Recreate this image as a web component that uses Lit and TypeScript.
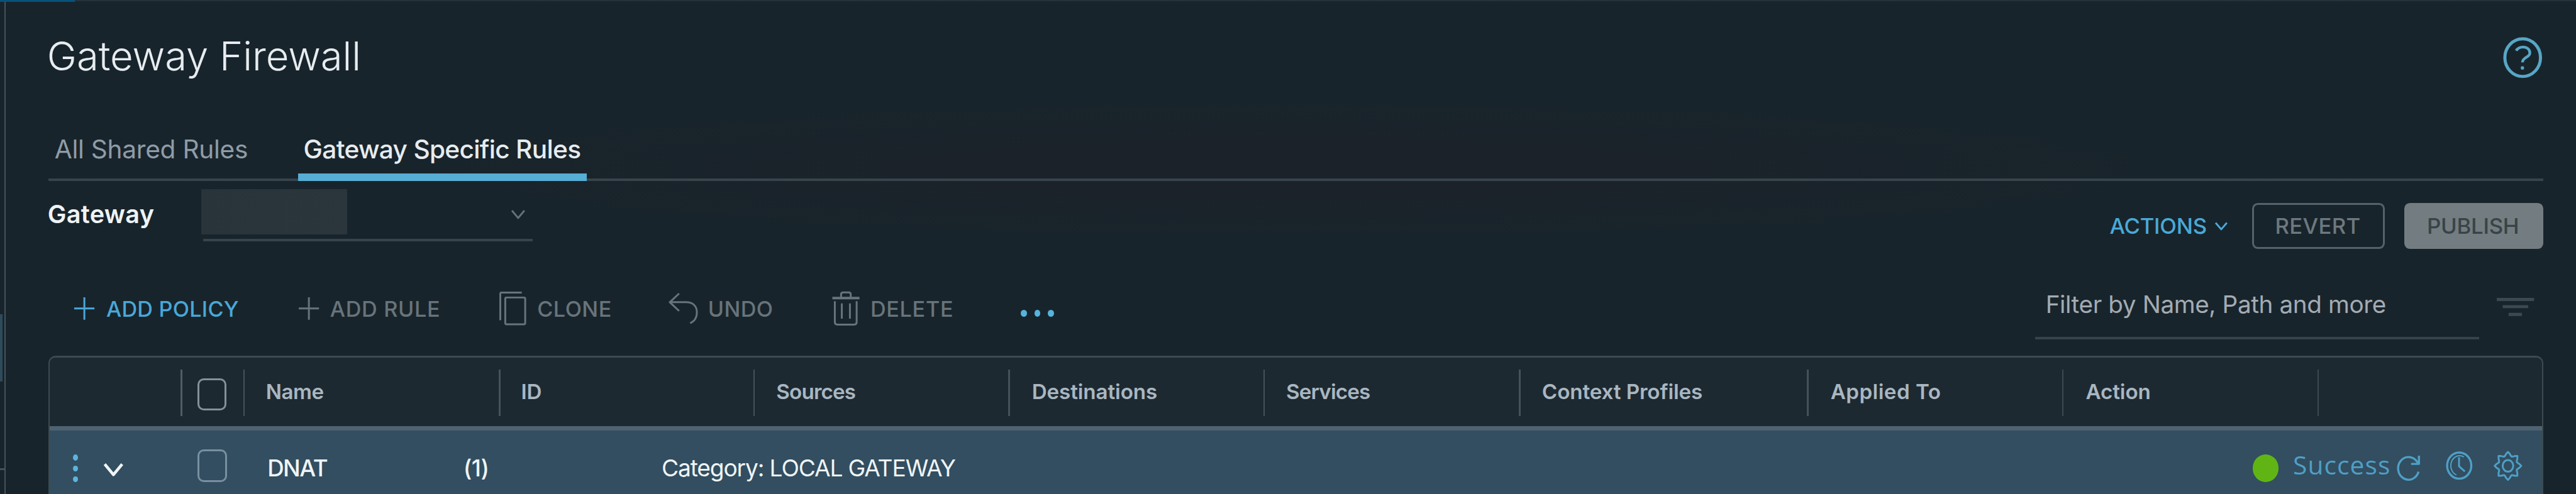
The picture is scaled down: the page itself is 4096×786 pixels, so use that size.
import { LitElement, html, css, svg } from "lit";
import { customElement } from "lit/decorators.js";

const COLUMNS = ["Name", "ID", "Sources", "Destinations", "Services", "Context Profiles", "Applied To", "Action", ""];

const gearPath = (() => {
  const cx = 22, cy = 23.5, pts: string[] = [];
  for (let i = 0; i < 8; i++) {
    const steps: [number, number][] = [[-9, 20.8], [0, 22], [9, 20.8], [14.5, 17.2], [22.5, 15.8], [30.5, 17.2]];
    for (const [d, r] of steps) {
      const a = ((i * 45 + d - 90) * Math.PI) / 180;
      const rr = d === 0 ? r : r - (Math.abs(d) === 9 ? 1.6 : 0);
      pts.push(`${(cx + rr * 0.97 * Math.cos(a)).toFixed(2)} ${(cy + rr * 1.02 * Math.sin(a)).toFixed(2)}`);
    }
  }
  return `M${pts.join("L")}Z`;
})();

const icon = (cls: string, w: number, h: number, body: unknown) =>
  html`<svg class="icon ${cls}" width=${w} height=${h} viewBox="0 0 ${w} ${h}">${body}</svg>`;

const help = icon("help", 64, 67, svg`
  <ellipse cx="31.5" cy="33" rx="28.6" ry="30.2" stroke-width="5"/>
  <path d="M21 21.8C23.5 17.6 27.5 16 32 16C38.5 16 43 19.8 43 25.4C43 33 31.2 32 31.2 40.5" stroke-width="4.4"/>
  <rect class="solid" x="28.6" y="47" width="5" height="5.2" rx="1.5"/>`);
const plus = icon("plus", 35, 38, svg`<path d="M17.3 1V37M1 19H33.5" stroke-width="3"/>`);
const clone = icon("", 47, 60, svg`
  <path d="M3.5 49V6.5Q3.5 4.5 5.5 4.5H38"/><rect x="11.5" y="12.5" width="32" height="43" rx="2"/>`);
const undo = icon("", 50, 54, svg`
  <path d="M18 3L3 17L18 31M3 17H29C41 17 46.5 24 46.5 33C46.5 42 42 48 35.7 50.5"/>`);
const trash = icon("", 46, 58, svg`
  <path d="M1.5 12.3H45" stroke-width="4"/>
  <path d="M15.5 11V6.5Q15.5 3.3 18.7 3.3H27.8Q31 3.3 31 6.5V11M5.5 17.5V51Q5.5 55 9.5 55H36.5Q40.5 55 40.5 51V17.5M16.7 21V45.5M29.7 21V45.5"/>`);
const refresh = icon("", 38, 41, svg`
  <path d="M35 26.8A16.8 18.2 0 1 1 32.4 10.5L35 13.5M35.6 1V14.2H23" stroke-width="3.4"/>`);
const clock = icon("", 43, 46, svg`
  <ellipse cx="21.5" cy="23" rx="19.4" ry="21" stroke-width="3.4"/>
  <path d="M29 9.2A14 16 0 1 0 17 38" stroke-width="2"/>
  <path d="M21.2 9.5V24L30.5 32.5" stroke-width="3"/>`);
const gear = icon("", 44, 47, svg`
  <path d=${gearPath} stroke-width="3"/><ellipse cx="22" cy="23.5" rx="8.5" ry="9.3" stroke-width="3"/>`);
const filter = icon("filter", 60, 30, svg`<path d="M0 3.5H60M9.5 15H50.5M19 27.5H40.5" stroke-width="5"/>`);

@customElement("app-root")
export class AppRoot extends LitElement {
  static styles = css`
    :host { display: block; width: 4096px; height: 786px; overflow: hidden; background: #18252c; }
    * { box-sizing: border-box; }
    .app {
      zoom: 0.99105; display: flex; width: 4133px; height: 794px; overflow: hidden;
      font-family: Inter, "Open Sans", sans-serif; white-space: nowrap; color: #e6ecf0;
      background:
        linear-gradient(#26323a, #26323a) 0 0 / 100% 2px no-repeat,
        radial-gradient(ellipse 1400px 110px at 2080px 272px, #1b222a 40%, transparent 100%),
        #18242b;
    }
    .icon { display: block; flex: none; fill: none; stroke: currentColor; stroke-width: 3; stroke-linejoin: round; overflow: visible; }
    .solid { fill: currentColor; stroke: none; }

    .rail { flex: none; width: 9px; border-right: 2.1px solid #465259; display: flex; flex-direction: column; }
    .progress { height: 3px; width: 120px; background: #06537c; flex: none; }
    .active-nav { margin-top: 502px; height: 107px; width: 4px; background: #2e4b5b; flex: none; }
    .nav-line { margin-top: 140px; height: 3px; width: 7px; background: #465259; flex: none; }

    .main { flex: none; width: 4071.5px; padding-left: 68.5px; display: flex; flex-direction: column; }

    .title { flex: none; height: 180px; display: flex; justify-content: space-between; align-items: center; }
    .title h1 { margin: 0; font-size: 64px; font-weight: 350; letter-spacing: -0.05px; line-height: 80px; text-indent: -2px; }
    .help { color: #57a6c6; margin: 6px 1px 0 0; }

    .tabs { flex: none; height: 111px; display: flex; gap: 71.5px; background: linear-gradient(#38444b, #38444b) 0 107px / 100% 4px no-repeat; }
    .tab { height: 111px; padding: 9px 0 0 10px; font-size: 41px; line-height: 102px; }
    .shared { width: 329px; color: #8f9ca8; letter-spacing: -0.27px; }
    .specific { width: 463px; padding-left: 9px; font-weight: 500; letter-spacing: -0.7px; border-bottom: 12.2px solid #56aed5; }

    .gateway { flex: none; height: 139px; display: flex; align-items: flex-start; }
    .label { width: 245.5px; margin-top: 29px; line-height: 50px; text-indent: -1px; font-size: 40px; font-weight: 600; letter-spacing: 0.3px; color: #eef3f6; }
    .select { width: 532px; height: 97px; margin-top: 0; padding: 13px 12px 0 0; display: flex; justify-content: space-between; background: linear-gradient(#37444b, #37444b) 3px 92.5px / 529px 4.5px no-repeat; }
    .redacted { width: 234px; height: 72px; background: linear-gradient(90deg, #28343a, #2a353c); }
    .caret { color: #65727a; margin-top: 32px; }
    .buttons { margin-left: auto; margin-top: 35px; display: flex; align-items: center; height: 74px; font-size: 35px; font-weight: 500; line-height: 74px; }
    .actions { display: flex; align-items: center; color: #4aa9d8; letter-spacing: -0.23px; gap: 12px; margin-right: 38.5px; }
    .btn { height: 74px; border-radius: 9px; display: flex; align-items: center; justify-content: center; }
    .revert { width: 213.5px; border: 3.1px solid #566269; color: #6d787f; letter-spacing: 0.32px; margin-right: 31.5px; padding-right: 2px; }
    .publish { width: 222.5px; background: #737d81; color: #384348; letter-spacing: -0.21px; padding-right: 3px; }

    .toolbar { flex: none; height: 141px; padding-bottom: 10px; display: flex; align-items: center; font-size: 34.5px; font-weight: 550; color: #68747b; }
    .tool { display: flex; align-items: center; flex: none; }
    .policy { width: 359.5px; padding-left: 41px; gap: 17px; color: #48a8d8; letter-spacing: 0.25px; }
    .rule { width: 322px; padding-left: 41.5px; gap: 16px; letter-spacing: 0.7px; }
    .clone { width: 313px; padding-left: 40px; gap: 16px; letter-spacing: 0.5px; }
    .undo { width: 262px; padding-left: 0; gap: 14px; letter-spacing: 0.4px; }
    .delete { width: 304px; gap: 16.5px; letter-spacing: 0.7px; }
    .more { display: flex; gap: 11.5px; margin-top: 15px; }
    .more i { width: 10px; height: 11px; border-radius: 50%; background: #55b4de; }
    .search { margin: 10px 0 0 auto; width: 712px; height: 88px; padding: 0 0 18px 16.5px; font-size: 39px; font-weight: 400; line-height: 65px; letter-spacing: -0.38px; color: #a3abb3; border-bottom: 4.1px solid #37434a; }
    .filter { color: #3c4950; margin: -6px 15px 0 28px; }

    .table { flex: none; width: 4003px; height: 240px; border: 2.1px solid #3d4a51; border-top-width: 3.1px; border-radius: 12px 12px 0 0; overflow: hidden; }
    .thead { height: 117px; display: grid; grid-template-columns: 210.5px 101px 409px 409px 409px 409px 409.5px 463px 409px 410px 1fr; align-items: center; background: #1d2931; border-bottom: 7.1px solid #4e6270; }
    .th { height: 75px; margin-top: 4px; border-left: 3.1px solid #45525a; padding-left: 34.5px; font-size: 33.5px; font-weight: 600; line-height: 71px; color: #a9b7c1; letter-spacing: -0.11px; }
    .pick { border-left-color: #505d65; padding: 14px 0 0 23.5px; }
    .th.c0 { letter-spacing: -0.45px; border-left-width: 2.1px; padding-left: 33.5px; }
    .th.c1 { padding-left: 33px; }
    .th.c2 { letter-spacing: -0.85px; border-left-width: 2.1px; }
    .th.c4 { letter-spacing: -0.88px; border-left-width: 2.1px; }
    .th.c6 { letter-spacing: 0.46px; }
    .th.c7, .th.c8 { border-left-width: 2.1px; border-left-color: #3b4950; }
    .th.c7 { padding-left: 36px; }
    .box { display: block; width: 47px; height: 51px; border: 3.1px solid #84919a; border-radius: 10px; }

    .row { height: 120px; padding-right: 33px; display: grid; grid-template-columns: 85.5px 152px 112px 314.5px 318px 1fr auto; align-items: center; background: #324e60; font-size: 37px; color: #f0f4f6; }
    .row .box { height: 52px; margin-top: -7px; border-color: #7890a0; }
    .dots { display: flex; flex-direction: column; gap: 8px; padding-left: 37.5px; margin-top: 2px; }
    .dots i { width: 8px; height: 9.5px; border-radius: 50%; background: #5cb4dd; }
    .expand { margin-top: 7px; }
    .name { font-weight: 550; letter-spacing: -1.5px; }
    .count { font-weight: 550; letter-spacing: -0.6px; }
    .category { font-size: 37.5px; letter-spacing: -1.16px; }
    .status { display: flex; align-items: center; color: #4f9fc6; margin-top: -7px; }
    .ok { width: 42px; height: 44px; border-radius: 50%; background: #60b515; margin: 9px 23px 0 0; }
    .success { width: 166px; font-family: "Open Sans", "Noto Sans", sans-serif; font-size: 41px; letter-spacing: 1.1px; line-height: 56px; margin-top: -2px; }
    .refresh { margin-top: 7px; width: 79px; }
    .history { width: 77.5px; }
  `;

  render() {
    return html`
      <div class="app">
        <div class="rail">
          <div class="progress"></div>
          <div class="active-nav"></div>
          <div class="nav-line"></div>
        </div>
        <div class="main">
          <header class="title"><h1>Gateway Firewall</h1>${help}</header>
          <nav class="tabs">
            <div class="tab shared">All Shared Rules</div>
            <div class="tab specific">Gateway Specific Rules</div>
          </nav>
          <section class="gateway">
            <div class="label">Gateway</div>
            <div class="select">
              <div class="redacted"></div>
              ${icon("caret", 24, 17, svg`<path d="M2 2L12 14L22 2"/>`)}
            </div>
            <div class="buttons">
              <div class="actions"><span>ACTIONS</span>${icon("", 22, 14, svg`<path d="M2 1.5L11 12L20 1.5"/>`)}</div>
              <div class="btn revert">REVERT</div>
              <div class="btn publish">PUBLISH</div>
            </div>
          </section>
          <section class="toolbar">
            <div class="tool policy">${plus}<span>ADD POLICY</span></div>
            <div class="tool rule">${plus}<span>ADD RULE</span></div>
            <div class="tool clone">${clone}<span>CLONE</span></div>
            <div class="tool undo">${undo}<span>UNDO</span></div>
            <div class="tool delete">${trash}<span>DELETE</span></div>
            <div class="more"><i></i><i></i><i></i></div>
            <div class="search">Filter by Name, Path and more</div>
            ${filter}
          </section>
          <section class="table">
            <div class="thead">
              <span></span>
              <div class="th pick"><span class="box"></span></div>
              ${COLUMNS.map((c, i) => html`<div class="th c${i}">${c}</div>`)}
            </div>
            <div class="row">
              <div class="dots"><i></i><i></i><i></i></div>
              ${icon("expand", 33, 23, svg`<path d="M2.5 2.5L16.5 19.5L30.5 2.5" stroke-width="4.6"/>`)}
              <span class="box"></span>
              <span class="name">DNAT</span>
              <span class="count">(1)</span>
              <span class="category">Category: LOCAL GATEWAY</span>
              <div class="status">
                <span class="ok"></span>
                <span class="success">Success</span>
                <span class="refresh">${refresh}</span>
                <span class="history">${clock}</span>
                ${gear}
              </div>
            </div>
          </section>
        </div>
      </div>`;
  }
}
